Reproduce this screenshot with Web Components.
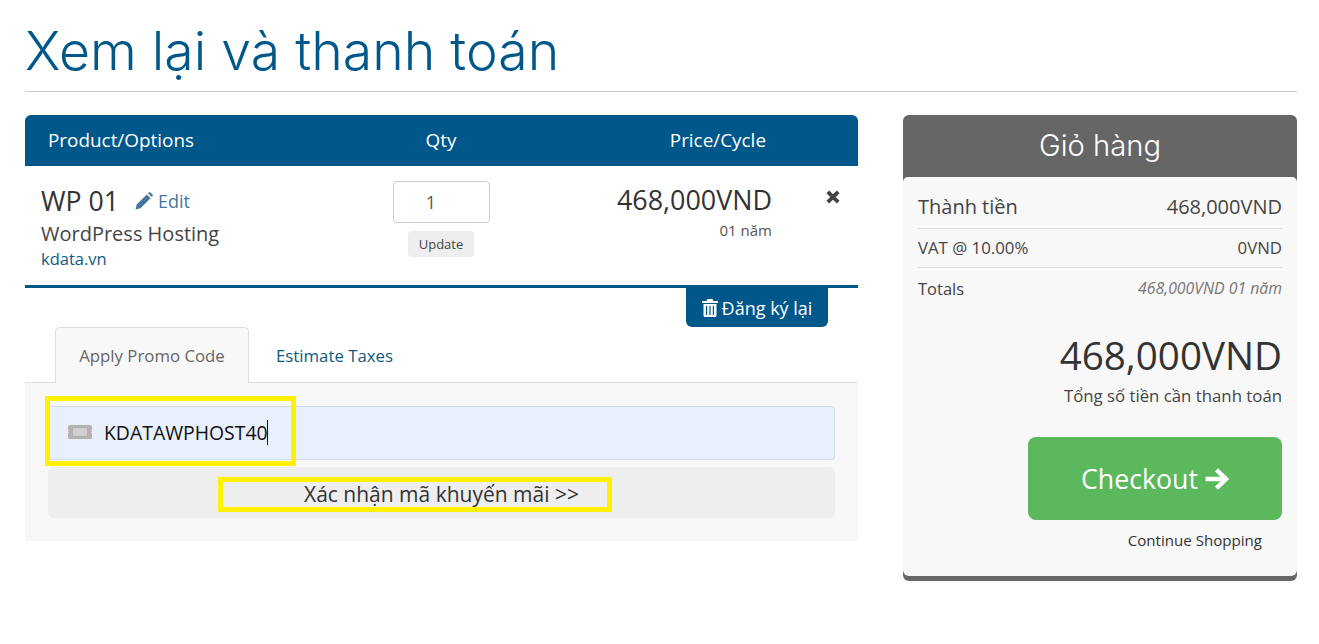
<!DOCTYPE html>
<html lang="vi">
<head>
<meta charset="utf-8">
<title>Xem lại và thanh toán</title>
<style>
  html, body { margin: 0; background: #fff; }
  body { font-family: "Open Sans", "Noto Sans", sans-serif; color: #333; overflow: hidden; height: 644px; }
</style>
</head>
<body>
<checkout-page>
  <page-title slot="title">Xem lại và thanh toán</page-title>
  <div slot="main">
    <cart-table></cart-table>
    <promo-panel></promo-panel>
  </div>
  <order-summary slot="side"></order-summary>
</checkout-page>

<script>
// Layout shell
class CheckoutPage extends HTMLElement {
  constructor() {
    super();
    this.attachShadow({ mode: 'open' }).innerHTML = `
      <style>
        :host { display: block; padding: 0 22px 0 25px; }
        .cols { display: flex; justify-content: space-between; margin-top: 23px; }
        .main { width: 833px; }
        .side { width: 394px; }
      </style>
      <slot name="title"></slot>
      <div class="cols">
        <div class="main"><slot name="main"></slot></div>
        <div class="side"><slot name="side"></slot></div>
      </div>`;
  }
}

class PageTitle extends HTMLElement {
  constructor() {
    super();
    this.attachShadow({ mode: 'open' }).innerHTML = `
      <style>
        :host { display: block; height: 91px; border-bottom: 1px solid #ccc; }
        h1 { margin: 0; padding-top: 17px; font: 300 53.6px/68px Inter, "Open Sans", sans-serif; color: #00578a; }
      </style>
      <h1><slot></slot></h1>`;
  }
}

class CartTable extends HTMLElement {
  constructor() {
    super();
    this.attachShadow({ mode: 'open' }).innerHTML = `
      <style>
        :host { display: block; position: relative; }
        .grid { display: grid; grid-template-columns: 333px 166px 248px 86px; }
        .head { height: 51px; background: #00578a; color: #fff; border-radius: 6px 6px 0 0; font-size: 18.9px; align-items: center; padding-bottom: 2px; box-sizing: border-box; }
        .head div:nth-child(1) { padding-left: 23px; }
        .head div:nth-child(2) { text-align: center; }
        .head div:nth-child(3) { text-align: right; padding-right: 6px; }
        .row { height: 122px; box-sizing: border-box; border-bottom: 3px solid #00578a; }
        .prod { padding: 16px 0 0 16px; }
        .name { font-size: 26.6px; line-height: 36px; color: #333; display: flex; align-items: center; }
        .edit { color: #45769e; font-size: 18px; margin-left: 16px; display: inline-flex; align-items: center; gap: 5px; padding-top: 1px; }
        .desc { font-size: 20px; line-height: 28px; margin-top: 1px; color: #444; }
        .dom { font-size: 16.5px; line-height: 22px; color: #0f5a80; }
        .qty { display: flex; flex-direction: column; align-items: center; padding-top: 15px; }
        .qty .box { width: 97px; height: 42px; border: 1px solid #ccc; border-radius: 4px; display: flex; align-items: center; justify-content: center; box-sizing: border-box; padding-right: 20px; font-size: 18px; color: #555; }
        .qty .upd { margin-top: 8px; background: #eee; border-radius: 4px; font-size: 13px; line-height: 26px; padding: 0 10.5px; color: #444; }
        .price { text-align: right; padding-top: 16px; font-size: 26.9px; line-height: 36px; }
        .price small { display: block; font-size: 15px; line-height: 20px; margin-top: 2px; color: #555; }
        .rm { padding: 24px 0 0 54px; }
        .again { position: absolute; top: 173px; right: 30px; width: 142px; height: 39px; background: #00578a; color: #fff; border-radius: 0 0 6px 6px; font-size: 18px; display: flex; align-items: center; justify-content: center; gap: 4px; }
      </style>
      <div class="grid head"><div>Product/Options</div><div>Qty</div><div>Price/Cycle</div></div>
      <div class="grid row">
        <div class="prod">
          <div class="name">WP 01
            <span class="edit">
              <svg width="18" height="18" viewBox="0 0 18 18"><path fill="#45769e" d="M0.500 17.500l1.200-5L11.800 2.400l3.800 3.800L5.500 16.300z"/><path fill="#45769e" d="M12.900 1.300l0.800-0.800c0.500-0.500 1.200-0.500 1.700 0l2.100 2.100c0.500 0.500 0.500 1.200 0 1.700l-0.800 0.800z"/></svg>
              Edit
            </span>
          </div>
          <div class="desc">WordPress Hosting</div>
          <div class="dom">kdata.vn</div>
        </div>
        <div class="qty"><div class="box">1</div><div class="upd">Update</div></div>
        <div class="price">468,000VND<small>01 năm</small></div>
        <div class="rm">
          <svg width="14" height="14" viewBox="0 0 14 14" style="display:block"><path d="M1.800 1.800l10.400 10.400M12.200 1.800L1.800 12.200" stroke="#444" stroke-width="3.800" fill="none"/></svg>
        </div>
      </div>
      <div class="again">
        <svg width="16" height="18" viewBox="0 0 16 18"><path fill="#fff" d="M5.500 0h5l1 2H16v2H0V2h4.500z"/><path fill="#fff" fill-rule="evenodd" d="M1.500 5h13v11.500c0 0.800-0.700 1.500-1.500 1.500H3c-0.800 0-1.500-0.700-1.500-1.500zM4 7v9h1.200V7zM7.400 7v9h1.200V7zM10.800 7v9H12V7z"/></svg>
        Đăng ký lại
      </div>`;
  }
}

class PromoPanel extends HTMLElement {
  constructor() {
    super();
    this.attachShadow({ mode: 'open' }).innerHTML = `
      <style>
        :host { display: block; position: relative; margin-top: 39px; }
        .tabs { display: flex; height: 56px; padding-left: 30px; border-bottom: 1px solid #ddd; box-sizing: border-box; font-size: 16.8px; }
        .tab { width: 194px; box-sizing: border-box; border: 1px solid #ddd; border-bottom: 0; border-radius: 5px 5px 0 0; background: #f8f8f8; height: 56px; line-height: 56px; text-align: center; color: #666; }
        .tab2 { padding-left: 27px; line-height: 57px; color: #0f5a80; }
        .pane { background: #f8f8f8; height: 158px; padding: 23px 23px 0; box-sizing: border-box; }
        .input { height: 54px; background: #e8f0fe; border: 1px solid #d4dce8; border-radius: 3px; box-sizing: border-box; display: flex; align-items: center; padding: 0 0 2px 19px; font-size: 19.400px; color: #111; }
        .input svg { margin-right: 12px; }
        .caret { display: inline-block; width: 1px; height: 25px; background: #111; margin-left: -1px; }
        .btn { height: 51px; margin-top: 7px; background: #eee; border-radius: 6px; text-align: center; font-size: 21px; line-height: 54px; color: #333; }
        .mark { position: absolute; border: 5px solid #fff200; box-sizing: border-box; pointer-events: none; }
        .m1 { left: 20px; top: 69px; width: 251px; height: 70px; }
        .m2 { left: 193px; top: 150px; width: 394px; height: 35px; }
      </style>
      <div class="tabs"><div class="tab">Apply Promo Code</div><div class="tab2">Estimate Taxes</div></div>
      <div class="pane">
        <div class="input">
          <svg width="24" height="16" viewBox="0 0 24 16"><path fill="#b3b3b3" d="M1.500 1h21a1.500 1.500 0 0 1 1.500 1.500V5.500a1.200 1.200 0 0 0 0 2a1.200 1.200 0 0 0 0 2V13.500a1.500 1.500 0 0 1-1.500 1.500h-21A1.500 1.500 0 0 1 0 13.500V9.500a1.200 1.200 0 0 0 0-2a1.200 1.200 0 0 0 0-2V2.500A1.500 1.500 0 0 1 1.500 1z"/><rect x="5" y="4" width="14" height="8" fill="#d0d0d0"/></svg>
          <span>KDATAWPHOST40</span><span class="caret"></span>
        </div>
        <div class="btn">Xác nhận mã khuyến mãi &gt;&gt;</div>
      </div>
      <div class="mark m1"></div>
      <div class="mark m2"></div>`;
  }
}

class OrderSummary extends HTMLElement {
  constructor() {
    super();
    this.attachShadow({ mode: 'open' }).innerHTML = `
      <style>
        :host { display: block; background: #666; border-radius: 6px; padding-bottom: 5px; }
        h2 { margin: 0; height: 62px; text-align: center; color: #fff; font: 300 29.200px/62px Inter, "Open Sans", sans-serif; }
        .body { background: #f8f8f8; border-radius: 5px 5px 6px 6px; height: 399px; box-sizing: border-box; padding: 11px 15px 0 15px; }
        .line { display: flex; justify-content: space-between; align-items: center; box-sizing: border-box; border-bottom: 1px solid #ddd; color: #444; }
        .l1 { height: 41px; font-size: 20px; padding-bottom: 4px; }
        .l2 { height: 39px; font-size: 16.800px; padding-bottom: 2px; }
        .l3 { height: 40px; font-size: 16.500px; border: 0; padding-bottom: 0; }
        .l3 i { font-size: 15.800px; color: #777; }
        .total { text-align: right; font-size: 38.600px; line-height: 50px; margin-top: 22px; color: #333; }
        .label { text-align: right; font-size: 16.800px; line-height: 26px; margin-top: 3px; color: #444; }
        .go { margin: 28px 0 0 110px; height: 83px; background: #5cb85c; color: #fff; border-radius: 8px; display: flex; align-items: center; justify-content: center; gap: 6px; font-size: 26.700px; }
        .cont { text-align: right; padding-right: 20px; font-size: 15.100px; line-height: 20px; margin-top: 10px; color: #333; }
      </style>
      <h2>Giỏ hàng</h2>
      <div class="body">
        <div class="line l1"><span>Thành tiền</span><span>468,000VND</span></div>
        <div class="line l2"><span>VAT @ 10.00%</span><span>0VND</span></div>
        <div class="line l3"><span>Totals</span><i>468,000VND 01 năm</i></div>
        <div class="total">468,000VND</div>
        <div class="label">Tổng số tiền cần thanh toán</div>
        <div class="go">Checkout
          <svg width="25" height="24" viewBox="0 0 25 24"><path d="M1.500 12H21M12.500 2.800L22 12l-9.500 9.200" stroke="#fff" stroke-width="4.400" fill="none"/></svg>
        </div>
        <div class="cont">Continue Shopping</div>
      </div>`;
  }
}

customElements.define('checkout-page', CheckoutPage);
customElements.define('page-title', PageTitle);
customElements.define('cart-table', CartTable);
customElements.define('promo-panel', PromoPanel);
customElements.define('order-summary', OrderSummary);
</script>
</body>
</html>
